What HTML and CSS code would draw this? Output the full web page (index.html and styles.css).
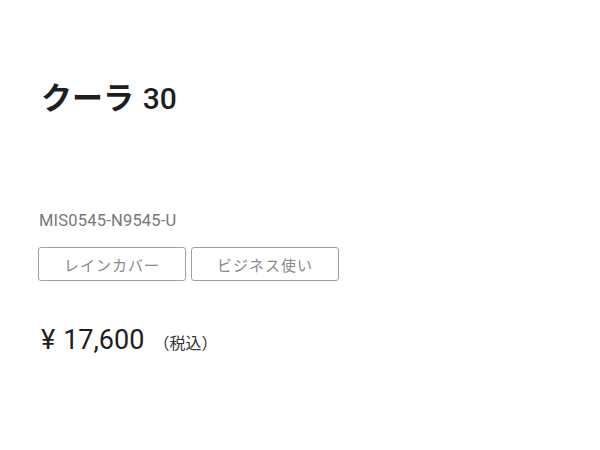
FILE: index.html
```html
<!DOCTYPE html>
<html lang="ja">
<head>
<meta charset="utf-8">
<link rel="stylesheet" href="styles.css">
</head>
<body>
<main class="product">
  <h1 class="title">クーラ <span class="title-num">30</span></h1>
  <p class="sku">MIS0545-N9545-U</p>
  <ul class="tags">
    <li class="tag">レインカバー</li>
    <li class="tag">ビジネス使い</li>
  </ul>
  <p class="price"><span class="yen">¥</span>17,600<span class="tax">（税込）</span></p>
</main>
</body>
</html>
```
FILE: styles.css
```css
html, body {
  margin: 0;
  padding: 0;
  background: #fff;
}
body {
  font-family: Roboto, "Noto Sans CJK JP", sans-serif;
  color: #222;
}
.product {
  padding: 78px 0 0 41px;
}
.title {
  margin: 0;
  font-size: 31px;
  font-weight: 700;
  line-height: 42px;
  letter-spacing: 0;
  color: #1f1f1f;
}
.title-num {
  font-size: 30px;
  font-weight: 500;
  margin-left: 1px;
}
.sku {
  margin: 90px 0 0 -2px;
  font-size: 16.5px;
  line-height: 22px;
  letter-spacing: 0.2px;
  color: #777;
}
.tags {
  list-style: none;
  margin: 15px 0 0 -3px;
  padding: 0;
  display: flex;
  gap: 5px;
}
.tag {
  box-sizing: border-box;
  width: 148px;
  height: 34px;
  border: 1px solid #a0a0a0;
  border-radius: 3px;
  display: flex;
  align-items: center;
  justify-content: center;
  font-size: 15px;
  color: #8a8a8a;
  letter-spacing: 1px;
}
.price {
  margin: 41px 0 0;
  font-size: 27px;
  line-height: 36px;
  color: #1e1e1e;
}
.yen {
  margin-right: 8px;
}
.tax {
  font-size: 16px;
  margin-left: 9px;
  color: #333;
}
```
